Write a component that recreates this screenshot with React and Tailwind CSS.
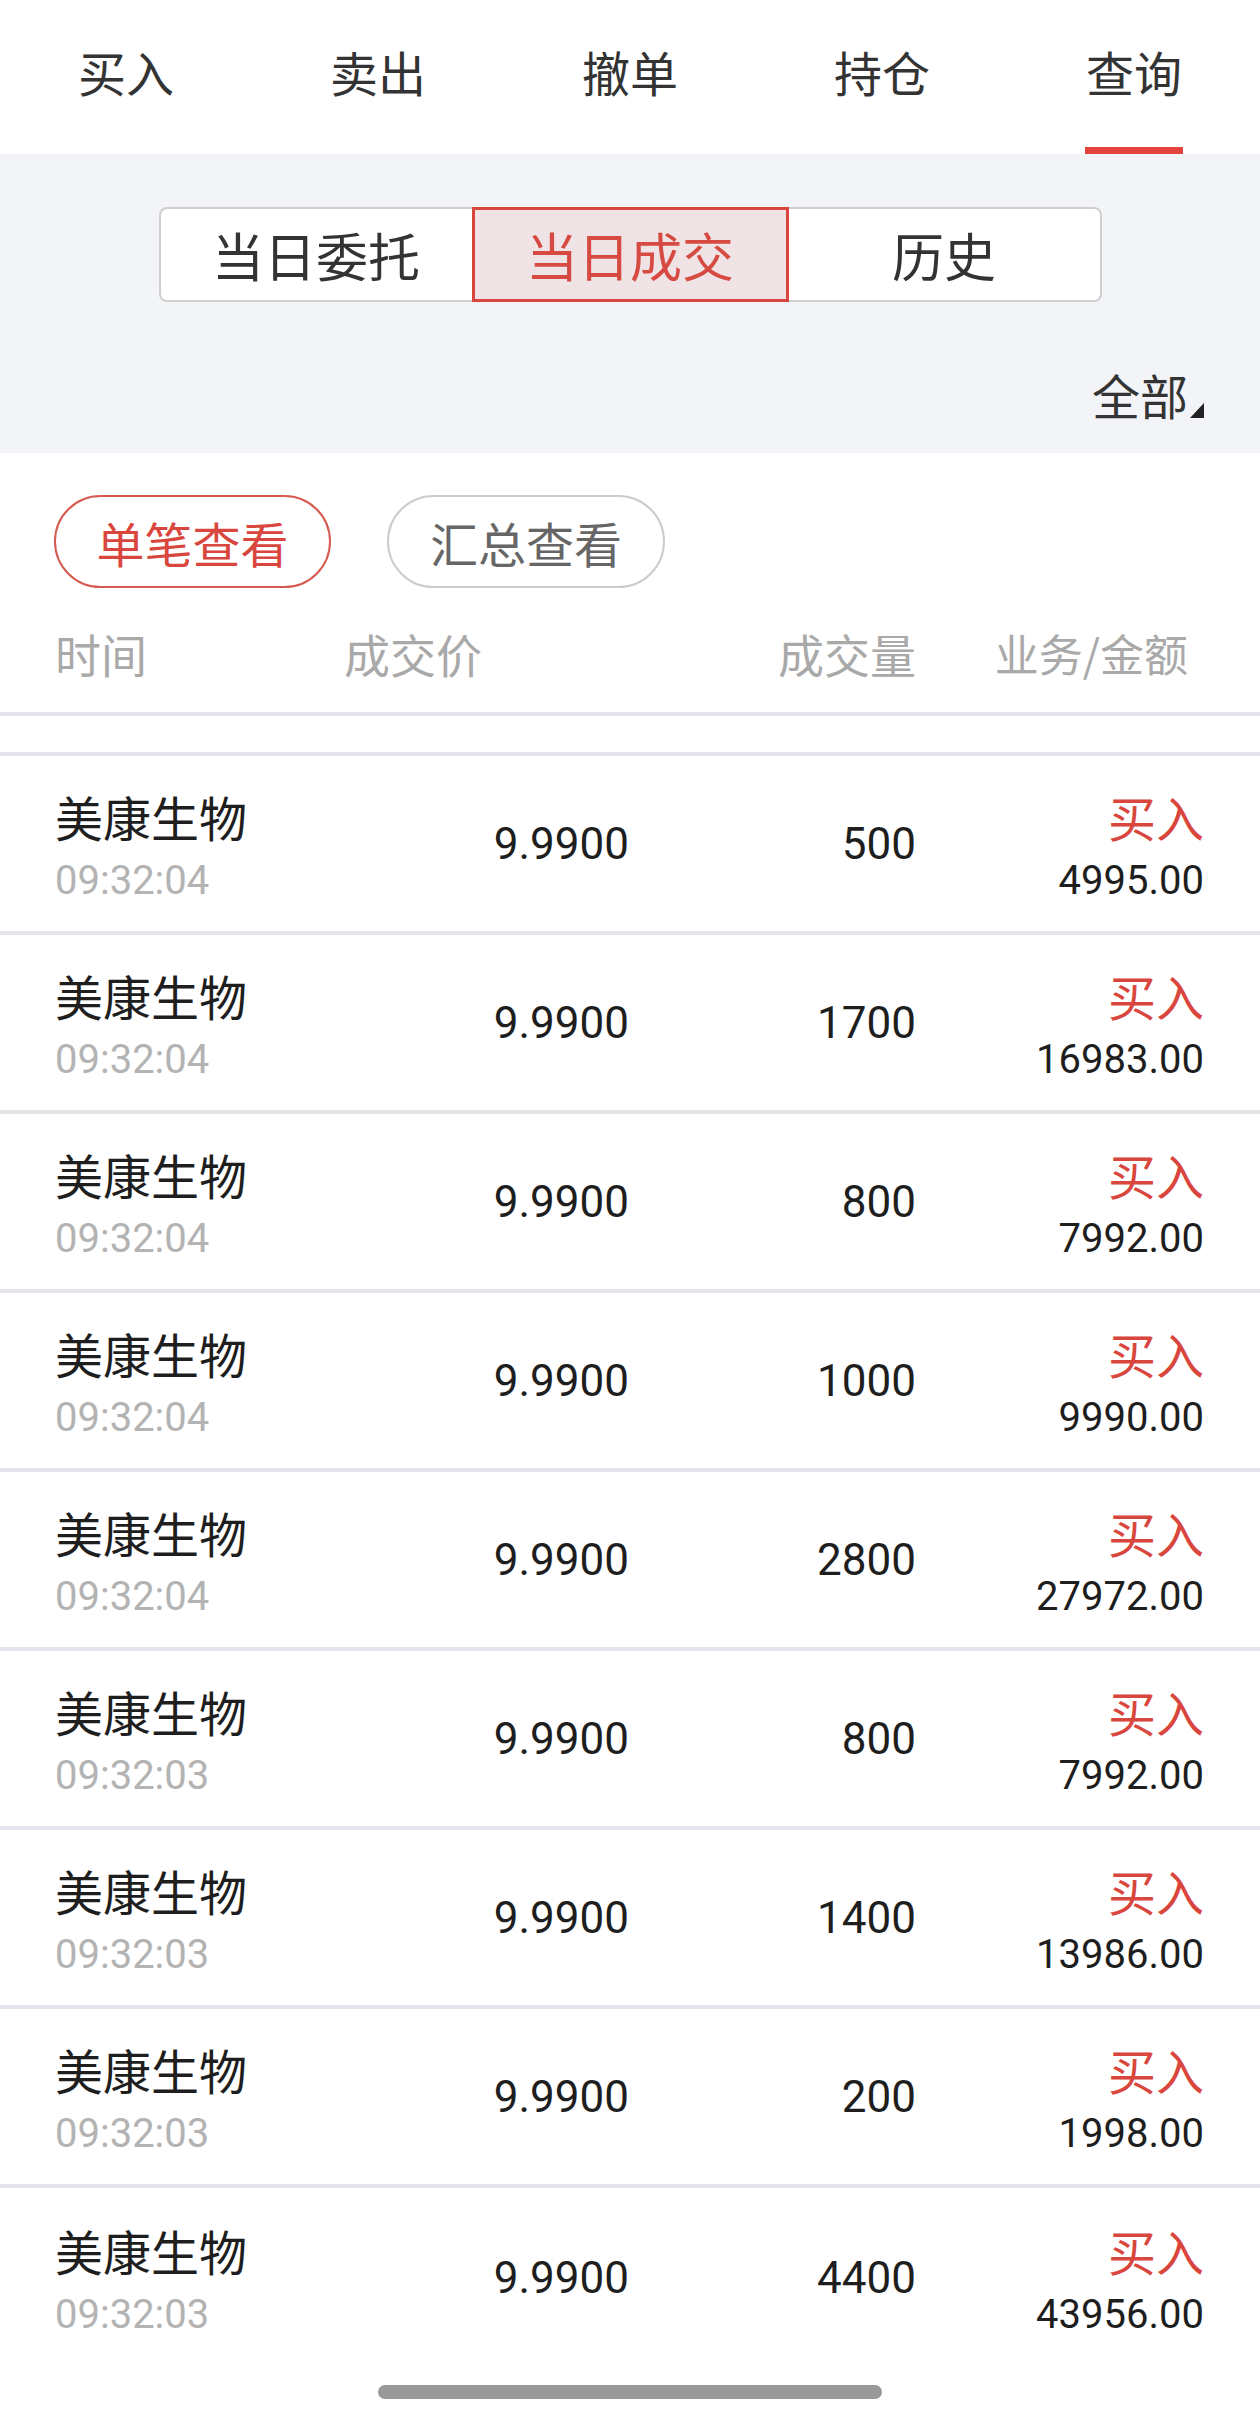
import React from 'react';

const CJK = "font-['Noto_Sans_CJK_SC','Noto_Sans',sans-serif]";
const NUM = "font-['Roboto','Noto_Sans_CJK_SC',sans-serif]";

const tabs = ['买入', '卖出', '撤单', '持仓', '查询'];
const segments = ['当日委托', '当日成交', '历史'];

const trades = [
  { time: '09:32:04', qty: '500', amount: '4995.00' },
  { time: '09:32:04', qty: '1700', amount: '16983.00' },
  { time: '09:32:04', qty: '800', amount: '7992.00' },
  { time: '09:32:04', qty: '1000', amount: '9990.00' },
  { time: '09:32:04', qty: '2800', amount: '27972.00' },
  { time: '09:32:03', qty: '800', amount: '7992.00' },
  { time: '09:32:03', qty: '1400', amount: '13986.00' },
  { time: '09:32:03', qty: '200', amount: '1998.00' },
  { time: '09:32:03', qty: '4400', amount: '43956.00' },
];

const TradeRow = ({ trade, last }) => (
  <div
    className={
      'flex items-center h-[179px] pl-[55px] pr-[56px] ' +
      (last ? '' : 'border-b-4 border-[#e4e5ea]')
    }
  >
    {/* Name / time */}
    <div className="w-[289px] flex flex-col pt-[5px]">
      <div className={`${CJK} text-[48px] leading-[60px] text-[#1e1e1e]`}>美康生物</div>
      <div className={`${NUM} text-[40px] leading-[50px] mt-[10px] text-[#b3b3b3]`}>
        {trade.time}
      </div>
    </div>
    <div className={`${NUM} w-[285px] text-right text-[44px] leading-[50px] text-[#1e1e1e]`}>
      9.9900
    </div>
    <div className={`${NUM} w-[287px] text-right text-[44px] leading-[50px] text-[#1e1e1e]`}>
      {trade.qty}
    </div>
    <div className="w-[288px] flex flex-col items-end pt-[5px]">
      <div className={`${CJK} text-[48px] leading-[60px] text-[#d9463e]`}>买入</div>
      <div className={`${NUM} text-[40px] leading-[50px] mt-[10px] text-[#1e1e1e]`}>
        {trade.amount}
      </div>
    </div>
  </div>
);

const App = () => {
  return (
    <div className={`w-[1260px] h-[2424px] bg-white overflow-hidden ${CJK}`}>
      {/* Top tabs */}
      <div className="flex h-[154px] bg-white">
        {tabs.map((t, i) => (
          <div key={t} className="flex-1 flex flex-col items-center">
            <div className="h-[147px] flex items-center pb-[6px] text-[48px] text-[#333333]">
              {t}
            </div>
            <div className={'w-[98px] h-[7px] ' + (i === 4 ? 'bg-[#e0443c]' : '')} />
          </div>
        ))}
      </div>

      {/* Gray filter area */}
      <div className="bg-[#f3f4f8] h-[299px] pt-[53px]">
        <div className="flex w-[943px] h-[95px] mx-auto">
          {segments.map((s, i) => (
            <div
              key={s}
              className={
                'flex-1 flex items-center justify-center text-[52px] ' +
                (i === 1
                  ? 'border-[3px] border-[#d9463e] bg-[#f0e3e5] text-[#d64a41]'
                  : i === 0
                  ? 'border-2 border-r-0 border-[#cfcfcf] rounded-l-[8px] bg-white text-[#333333]'
                  : 'border-2 border-l-0 border-[#cfcfcf] rounded-r-[8px] bg-white text-[#333333]')
              }
            >
              {s}
            </div>
          ))}
        </div>
        <div className="flex justify-end items-end pr-[56px] mt-[62px]">
          <span className="text-[48px] leading-[60px] text-[#333333]">全部</span>
          <svg width="14" height="15" viewBox="0 0 14 15" className="mb-[6px] ml-[2px]">
            <polygon points="14,0 14,15 0,15" fill="#222222" />
          </svg>
        </div>
      </div>

      {/* View mode pills */}
      <div className="flex gap-[56px] pl-[54px] pt-[42px]">
        <div className="w-[277px] h-[93px] rounded-full border-2 border-[#d65a50] flex items-center justify-center text-[48px] text-[#d9463e]">
          单笔查看
        </div>
        <div className="w-[278px] h-[93px] rounded-full border-2 border-[#cccccc] flex items-center justify-center text-[48px] text-[#666666]">
          汇总查看
        </div>
      </div>

      {/* Column header */}
      <div className="flex items-center h-[128px] pt-[6px] pl-[55px] pr-[56px] border-b-4 border-[#e4e5ea] text-[46px] text-[#a9a9a9]">
        <div className="w-[289px]">时间</div>
        <div className="w-[285px]">成交价</div>
        <div className="w-[287px] text-right">成交量</div>
        <div className="w-[288px] text-right pr-[16px] text-[44px]">业务/金额</div>
      </div>

      {/* Trade list (scrolled) */}
      <div className="h-[1651px] overflow-hidden">
        <div className="-mt-[139px]">
          <TradeRow trade={{ time: '09:32:04', qty: '1500', amount: '14985.00' }} />
          {trades.map((t, i) => (
            <TradeRow key={i} trade={t} last={i === trades.length - 1} />
          ))}
        </div>
      </div>

      {/* Home indicator */}
      <div className="pt-[18px]">
        <div className="w-[504px] h-[14px] rounded-full bg-[#999999] mx-auto" />
      </div>
    </div>
  );
};

export default App;
